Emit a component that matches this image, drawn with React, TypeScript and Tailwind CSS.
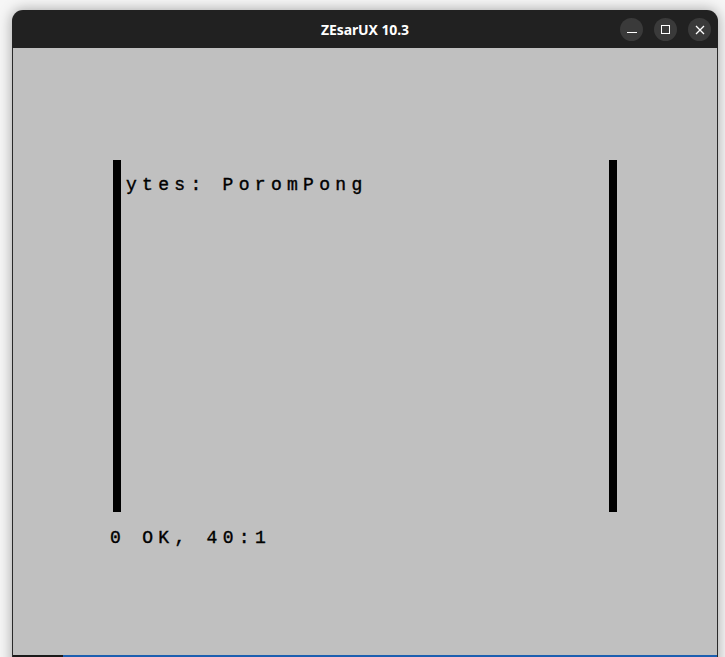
import React from 'react';

const spectrumFont = {
  fontFamily: '"Liberation Mono", "DejaVu Sans Mono", monospace',
};

const TitleButton: React.FC<{ children: React.ReactNode }> = ({ children }) => (
  <div className="w-[23px] h-[23px] rounded-full bg-[#3a3a3a] flex items-center justify-center">
    {children}
  </div>
);

const App: React.FC = () => {
  return (
    <div className="w-[725px] h-[657px] overflow-hidden bg-[#f6f6f6] pt-[10px] pl-[12px]">
      <div className="w-[706px] h-[660px] rounded-t-[11px] bg-[#212121] shadow-[0_0_14px_rgba(0,0,0,0.35)] flex flex-col overflow-hidden">
        {/* barra de título */}
        <div className="h-[38px] relative flex items-center justify-center shrink-0">
          <span
            className="text-white text-[14px] font-bold tracking-[-0.1px]"
            style={{ fontFamily: '"Noto Sans", "Open Sans", sans-serif' }}
          >
            ZEsarUX 10.3
          </span>
          <div className="absolute right-[7px] top-[8px] flex gap-[11px]">
            <TitleButton>
              <div className="w-[10px] h-[1px] bg-white mt-[5px]" />
            </TitleButton>
            <TitleButton>
              <div className="w-[9px] h-[9px] border border-white" />
            </TitleButton>
            <TitleButton>
              <svg width="10" height="10" viewBox="0 0 10 10">
                <path d="M1 1 L9 9 M9 1 L1 9" stroke="white" strokeWidth="1.3" />
              </svg>
            </TitleButton>
          </div>
        </div>

        {/* pantalla */}
        <div className="flex-1 bg-[#c0c0c0] border-x border-[#2a2a2a] flex flex-col">
          <div className="flex pl-[100px] pt-[112px]">
            <div className="w-[8px] h-[352px] bg-black" />
            <div className="w-[488px]">
              <div
                className="mt-[16px] ml-[5px] text-black text-[18px] leading-[18px] tracking-[5.3px] whitespace-pre [-webkit-text-stroke:0.4px_black]"
                style={spectrumFont}
              >
                ytes: PoromPong
              </div>
            </div>
            <div className="w-[8px] h-[352px] bg-black" />
          </div>
          <div
            className="mt-[17px] pl-[97px] text-black text-[18px] leading-[18px] tracking-[5.3px] whitespace-pre [-webkit-text-stroke:0.4px_black]"
            style={spectrumFont}
          >
            0 OK, 40:1
          </div>

          {/* franja inferior */}
          <div className="mt-[108px] h-[3px] flex shrink-0">
            <div className="w-[50px] bg-[#1a1a1a]" />
            <div className="flex-1 bg-[#1c5fb0]" />
          </div>
        </div>
      </div>
    </div>
  );
};

export default App;
